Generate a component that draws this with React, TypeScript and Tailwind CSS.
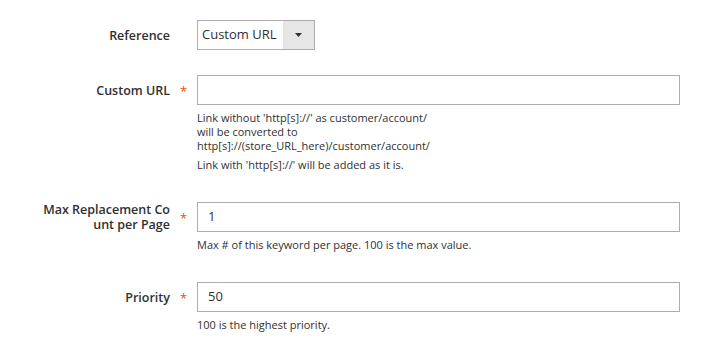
const font = { fontFamily: '"Open Sans", "Noto Sans", sans-serif' };

function Asterisk() {
  return <span className="text-[#eb5202] text-[13px] leading-[15px] pt-[3px]">*</span>;
}

interface FieldProps {
  label: string;
  required?: boolean;
  children: React.ReactNode;
  className?: string;
}

function Field({ label, required, children, className = '' }: FieldProps) {
  return (
    <div className={`flex items-start ${className}`}>
      <div className="w-[170px] h-[30px] shrink-0 flex items-center justify-end">
        <label className="w-[129px] text-right text-[12.5px] leading-[15px] font-semibold text-[#303030] break-all">
          {label}
        </label>
      </div>
      <div className="w-[27px] h-[30px] shrink-0 flex items-center justify-center">
        {required && <Asterisk />}
      </div>
      <div className="w-[483px] shrink-0">{children}</div>
    </div>
  );
}

function TextInput({ value = '' }: { value?: string }) {
  return (
    <div className="h-[30px] border border-[#adadad] bg-white px-[10px] flex items-center text-[13px] text-[#303030]">
      {value}
    </div>
  );
}

function Note({ children }: { children: React.ReactNode }) {
  return <p className="mt-[6px] text-[11px] leading-[14px] text-[#303030]">{children}</p>;
}

export default function App() {
  return (
    <div className="w-[721px] h-[345px] bg-white overflow-hidden pt-[20px]" style={font}>
      <Field label="Reference">
        <div className="w-[118px] h-[30px] border border-[#adadad] flex items-stretch bg-white">
          <div className="flex-1 flex items-center pl-[4px] text-[13px] text-[#303030]">Custom URL</div>
          <div className="w-[31px] bg-[#e6e6e6] flex items-center justify-center">
            <svg width="7" height="4" viewBox="0 0 7 4">
              <path d="M0 0h7L3.5 4z" fill="#333" />
            </svg>
          </div>
        </div>
      </Field>

      <Field label="Custom URL" required className="mt-[25px]">
        <TextInput />
        <Note>
          Link without 'http[s]://' as customer/account/
          <br />
          will be converted to
          <br />
          http[s]://(store_URL_here)/customer/account/
        </Note>
        <p className="mt-[5px] text-[11px] leading-[14px] text-[#303030]">
          Link with 'http[s]://' will be added as it is.
        </p>
      </Field>

      <Field label="Max Replacement Count per Page" required className="mt-[30px]">
        <TextInput value="1" />
        <Note>Max # of this keyword per page. 100 is the max value.</Note>
      </Field>

      <Field label="Priority" required className="mt-[30px]">
        <TextInput value="50" />
        <Note>100 is the highest priority.</Note>
      </Field>
    </div>
  );
}
